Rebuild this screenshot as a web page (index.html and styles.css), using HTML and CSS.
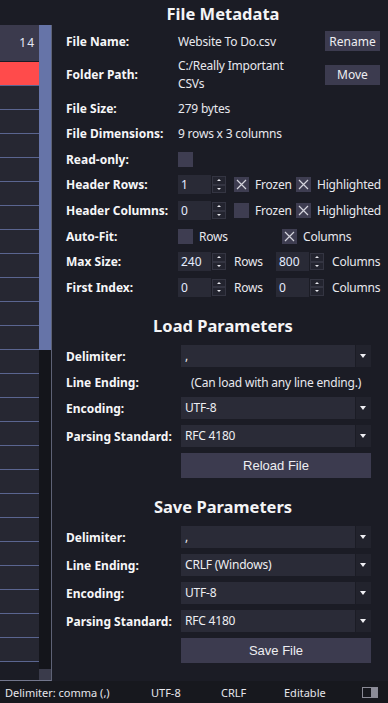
FILE: index.html
```html
<!DOCTYPE html>
<html lang="en">
<head>
    <meta charset="UTF-8">
    <meta name="viewport" content="width=device-width, initial-scale=1.0">
    <title>CSV Editor - File Metadata</title>
    <link rel="stylesheet" href="styles.css">
</head>
<body>
    <div class="window">
        <div class="main">
            <!-- Tabela (só a última coluna aparece) -->
            <div class="table-pane">
                <div class="table-top"></div>
                <div class="table-frame">
                    <div class="table-area">
                        <div class="cells">
                            <div class="cell cell-header">14</div>
                            <div class="cell cell-error"></div>
                            <div class="cell"></div><div class="cell"></div><div class="cell"></div>
                            <div class="cell"></div><div class="cell"></div><div class="cell"></div>
                            <div class="cell"></div><div class="cell"></div><div class="cell"></div>
                            <div class="cell"></div><div class="cell"></div><div class="cell"></div>
                            <div class="cell"></div><div class="cell"></div><div class="cell"></div>
                            <div class="cell"></div><div class="cell"></div><div class="cell"></div>
                            <div class="cell"></div><div class="cell"></div><div class="cell"></div>
                            <div class="cell"></div><div class="cell"></div><div class="cell"></div>
                        </div>
                        <div class="vscroll"><div class="vscroll-thumb"></div></div>
                    </div>
                    <div class="hscroll"><div class="hscroll-corner"></div></div>
                </div>
            </div>

            <div class="panel">
                <h2 class="section-title first">File Metadata</h2>
                <div class="form meta">
                    <div class="row">
                        <span class="label">File Name:</span>
                        <span class="value grow">Website To Do.csv</span>
                        <button class="btn btn-small">Rename</button>
                    </div>
                    <div class="row">
                        <span class="label">Folder Path:</span>
                        <span class="value path">C:/Really Important CSVs</span>
                        <button class="btn btn-small">Move</button>
                    </div>
                    <div class="row">
                        <span class="label">File Size:</span>
                        <span class="value">279 bytes</span>
                    </div>
                    <div class="row">
                        <span class="label">File Dimensions:</span>
                        <span class="value">9 rows x 3 columns</span>
                    </div>
                    <div class="row">
                        <span class="label">Read-only:</span>
                        <span class="check"></span>
                    </div>
                    <div class="row">
                        <span class="label">Header Rows:</span>
                        <div class="spin"><span class="spin-value">1</span><span class="spin-buttons"><span class="spin-up"></span><span class="spin-down"></span></span></div>
                        <span class="check checked after-spin"><svg viewBox="0 0 15 15"><path d="M3 3 L12 12 M12 3 L3 12"/></svg></span>
                        <span class="value opt frozen">Frozen</span>
                        <span class="check checked after-opt"><svg viewBox="0 0 15 15"><path d="M3 3 L12 12 M12 3 L3 12"/></svg></span>
                        <span class="value opt">Highlighted</span>
                    </div>
                    <div class="row">
                        <span class="label">Header Columns:</span>
                        <div class="spin"><span class="spin-value">0</span><span class="spin-buttons"><span class="spin-up"></span><span class="spin-down"></span></span></div>
                        <span class="check after-spin"></span>
                        <span class="value opt frozen">Frozen</span>
                        <span class="check checked after-opt"><svg viewBox="0 0 15 15"><path d="M3 3 L12 12 M12 3 L3 12"/></svg></span>
                        <span class="value opt">Highlighted</span>
                    </div>
                    <div class="row">
                        <span class="label">Auto-Fit:</span>
                        <span class="check"></span>
                        <span class="value opt autofit-rows">Rows</span>
                        <span class="check checked after-opt"><svg viewBox="0 0 15 15"><path d="M3 3 L12 12 M12 3 L3 12"/></svg></span>
                        <span class="value opt">Columns</span>
                    </div>
                    <div class="row">
                        <span class="label">Max Size:</span>
                        <div class="spin"><span class="spin-value">240</span><span class="spin-buttons"><span class="spin-up"></span><span class="spin-down"></span></span></div>
                        <span class="value unit unit-rows">Rows</span>
                        <div class="spin"><span class="spin-value">800</span><span class="spin-buttons"><span class="spin-up"></span><span class="spin-down"></span></span></div>
                        <span class="value unit">Columns</span>
                    </div>
                    <div class="row">
                        <span class="label">First Index:</span>
                        <div class="spin"><span class="spin-value">0</span><span class="spin-buttons"><span class="spin-up"></span><span class="spin-down"></span></span></div>
                        <span class="value unit unit-rows">Rows</span>
                        <div class="spin"><span class="spin-value">0</span><span class="spin-buttons"><span class="spin-up"></span><span class="spin-down"></span></span></div>
                        <span class="value unit">Columns</span>
                    </div>
                </div>

                <h2 class="section-title">Load Parameters</h2>
                <div class="form params">
                    <div class="row">
                        <span class="label">Delimiter:</span>
                        <div class="combo"><span class="combo-text">,</span><span class="combo-btn"></span></div>
                    </div>
                    <div class="row row-note">
                        <span class="label">Line Ending:</span>
                        <span class="value note">(Can load with any line ending.)</span>
                    </div>
                    <div class="row">
                        <span class="label">Encoding:</span>
                        <div class="combo"><span class="combo-text">UTF-8</span><span class="combo-btn"></span></div>
                    </div>
                    <div class="row">
                        <span class="label">Parsing Standard:</span>
                        <div class="combo"><span class="combo-text">RFC 4180</span><span class="combo-btn"></span></div>
                    </div>
                    <div class="row">
                        <button class="btn btn-wide">Reload File</button>
                    </div>
                </div>

                <h2 class="section-title">Save Parameters</h2>
                <div class="form params">
                    <div class="row">
                        <span class="label">Delimiter:</span>
                        <div class="combo"><span class="combo-text">,</span><span class="combo-btn"></span></div>
                    </div>
                    <div class="row">
                        <span class="label">Line Ending:</span>
                        <div class="combo"><span class="combo-text">CRLF (Windows)</span><span class="combo-btn"></span></div>
                    </div>
                    <div class="row">
                        <span class="label">Encoding:</span>
                        <div class="combo"><span class="combo-text">UTF-8</span><span class="combo-btn"></span></div>
                    </div>
                    <div class="row">
                        <span class="label">Parsing Standard:</span>
                        <div class="combo"><span class="combo-text">RFC 4180</span><span class="combo-btn"></span></div>
                    </div>
                    <div class="row">
                        <button class="btn btn-wide">Save File</button>
                    </div>
                </div>
            </div>
        </div>

        <div class="statusbar">
            <span class="status-item delim">Delimiter: comma (,)</span>
            <span class="status-item enc">UTF-8</span>
            <span class="status-item eol">CRLF</span>
            <span class="status-item">Editable</span>
            <span class="status-toggle"></span>
        </div>
    </div>
</body>
</html>
```

FILE: styles.css
```css
* { box-sizing: border-box; }

body {
    margin: 0;
    background-color: #1b1c25;
    font-family: "Noto Sans", "Open Sans", sans-serif;
    color: #eeeef2;
}

.window {
    width: 388px;
    height: 703px;
    display: flex;
    flex-direction: column;
    overflow: hidden;
}
.main {
    flex: 1;
    display: flex;
    min-height: 0;
}

/* Tabela */
.table-pane {
    width: 52px;
    flex: none;
    display: flex;
    flex-direction: column;
}
.table-top {
    height: 25px;
}
.table-frame {
    flex: 1;
    display: flex;
    flex-direction: column;
    min-height: 0;
    border-right: 1px solid #5e6276;
    border-bottom: 1px solid #72768c;
}
.table-area {
    flex: 1;
    display: flex;
    min-height: 0;
    overflow: hidden;
}
.cells {
    width: 39px;
    overflow: hidden;
}
.cell {
    height: 24px;
    background-color: #262732;
    border-bottom: 1px solid #5a6590;
}
.cell-header {
    height: 37px;
    background-color: #3b3a4d;
    border-bottom-color: #1b1c25;
    text-align: right;
    padding-right: 4px;
    font-size: 12px;
    line-height: 36px;
    color: #e6e9f7;
    letter-spacing: 1px;
}
.cell-error {
    background-color: #ff4b4b;
}
.vscroll {
    width: 12px;
    background-color: #14151b;
}
.vscroll-thumb {
    height: 325px;
    background-color: #6674a8;
}
.hscroll {
    height: 11px;
    display: flex;
    justify-content: flex-end;
}
.hscroll-corner {
    width: 12px;
    background-color: #3a3b4b;
}

/* Painel */
.panel {
    width: 336px;
    flex: none;
    overflow: hidden;
    padding: 0 8px 0 14px;
}
.section-title {
    margin: 16px 0 6px;
    height: 26px;
    line-height: 26px;
    text-align: center;
    font-size: 16.5px;
    font-weight: 700;
    color: #f4f4f6;
}
.section-title.first {
    margin: 0 0 3px;
    height: 28px;
    line-height: 28px;
}

.form {
    display: flex;
    flex-direction: column;
}
.meta { gap: 5.6px; }
.params { gap: 6px; }

.row {
    display: flex;
    align-items: center;
    min-height: 20px;
}
.params .row { min-height: 22px; }
.params .row-note { min-height: 18px; }

.label {
    width: 112px;
    flex-shrink: 0;
    font-size: 12px;
    font-weight: 700;
    color: #f6f6f8;
}
.params .label { width: 115px; }

.value {
    font-size: 12px;
    letter-spacing: -0.2px;
    color: #e8e8ee;
    white-space: nowrap;
    flex-shrink: 0;
}
.value.grow { flex: 1; }
.value.path {
    width: 118px;
    white-space: normal;
    line-height: 18px;
}
.value.opt { margin-left: 6px; }
.frozen { width: 35px; }
.autofit-rows { width: 77px; }
.value.unit { margin-left: 7px; }
.unit-rows { width: 35px; }
.unit-rows + .spin { margin-left: 7px; }
.note {
    width: 190px;
    text-align: center;
}

/* Checkbox */
.check {
    width: 15px;
    height: 15px;
    flex-shrink: 0;
    background-color: #3e3d51;
}
.check svg {
    display: block;
    width: 15px;
    height: 15px;
    stroke: #d4d4dc;
    stroke-width: 1.2;
    fill: none;
}
.after-spin { margin-left: 7px; }
.after-opt { margin-left: 6px; }

/* Spinbox */
.spin {
    display: flex;
    width: 49px;
    height: 19px;
    background-color: #292a36;
    flex-shrink: 0;
}
.spin-value {
    flex: 1;
    padding-left: 3px;
    font-size: 12px;
    line-height: 19px;
    color: #e4ecff;
}
.spin-buttons {
    width: 16px;
    display: flex;
    flex-direction: column;
    border: 1px solid #1b1c25;
}
.spin-up, .spin-down {
    flex: 1;
    position: relative;
    background-color: #23242f;
    border: 1px solid #343542;
}
.spin-up::after, .spin-down::after {
    content: "";
    position: absolute;
    left: 4px;
    top: 2px;
    border-left: 2.5px solid transparent;
    border-right: 2.5px solid transparent;
}
.spin-up::after { border-bottom: 2px solid #e8e8ee; }
.spin-down::after { border-top: 2px solid #e8e8ee; }

/* Combo */
.combo {
    display: flex;
    width: 190px;
    height: 22px;
    background-color: #2a2b37;
}
.combo-text {
    flex: 1;
    padding-left: 4px;
    font-size: 12px;
    letter-spacing: -0.2px;
    line-height: 22px;
    color: #eeeef2;
}
.combo-btn {
    width: 16px;
    position: relative;
    background-color: #22232d;
    border-left: 1px solid #1b1c25;
}
.combo-btn::after {
    content: "";
    position: absolute;
    left: 4px;
    top: 9px;
    border-left: 3.5px solid transparent;
    border-right: 3.5px solid transparent;
    border-top: 4px solid #f0f0f4;
}

/* Botões */
.btn {
    border: none;
    padding: 0;
    background-color: #3c3b4f;
    color: #eeeef2;
    font-family: "Noto Sans", sans-serif;
    font-size: 12px;
    cursor: pointer;
    flex-shrink: 0;
}
.btn-small {
    margin-left: auto;
    width: 55px;
    height: 20px;
}
.btn-wide {
    margin-left: 115px;
    width: 190px;
    height: 25px;
    font-family: "Liberation Sans", Arial, sans-serif;
    font-size: 13px;
}

/* Barra de status */
.statusbar {
    height: 22px;
    display: flex;
    align-items: center;
    padding: 0 10px 0 5px;
    background-color: #17181e;
    font-size: 11px;
    color: #e6e6ec;
}
.status-item { white-space: nowrap; }
.delim { width: 146px; }
.enc { width: 70px; }
.eol { width: 63px; }
.status-toggle {
    margin-left: auto;
    width: 16px;
    height: 11px;
    border: 1px solid #8a8a96;
    background: linear-gradient(to right, #17181e 60%, #8c8c98 60%);
}
```
